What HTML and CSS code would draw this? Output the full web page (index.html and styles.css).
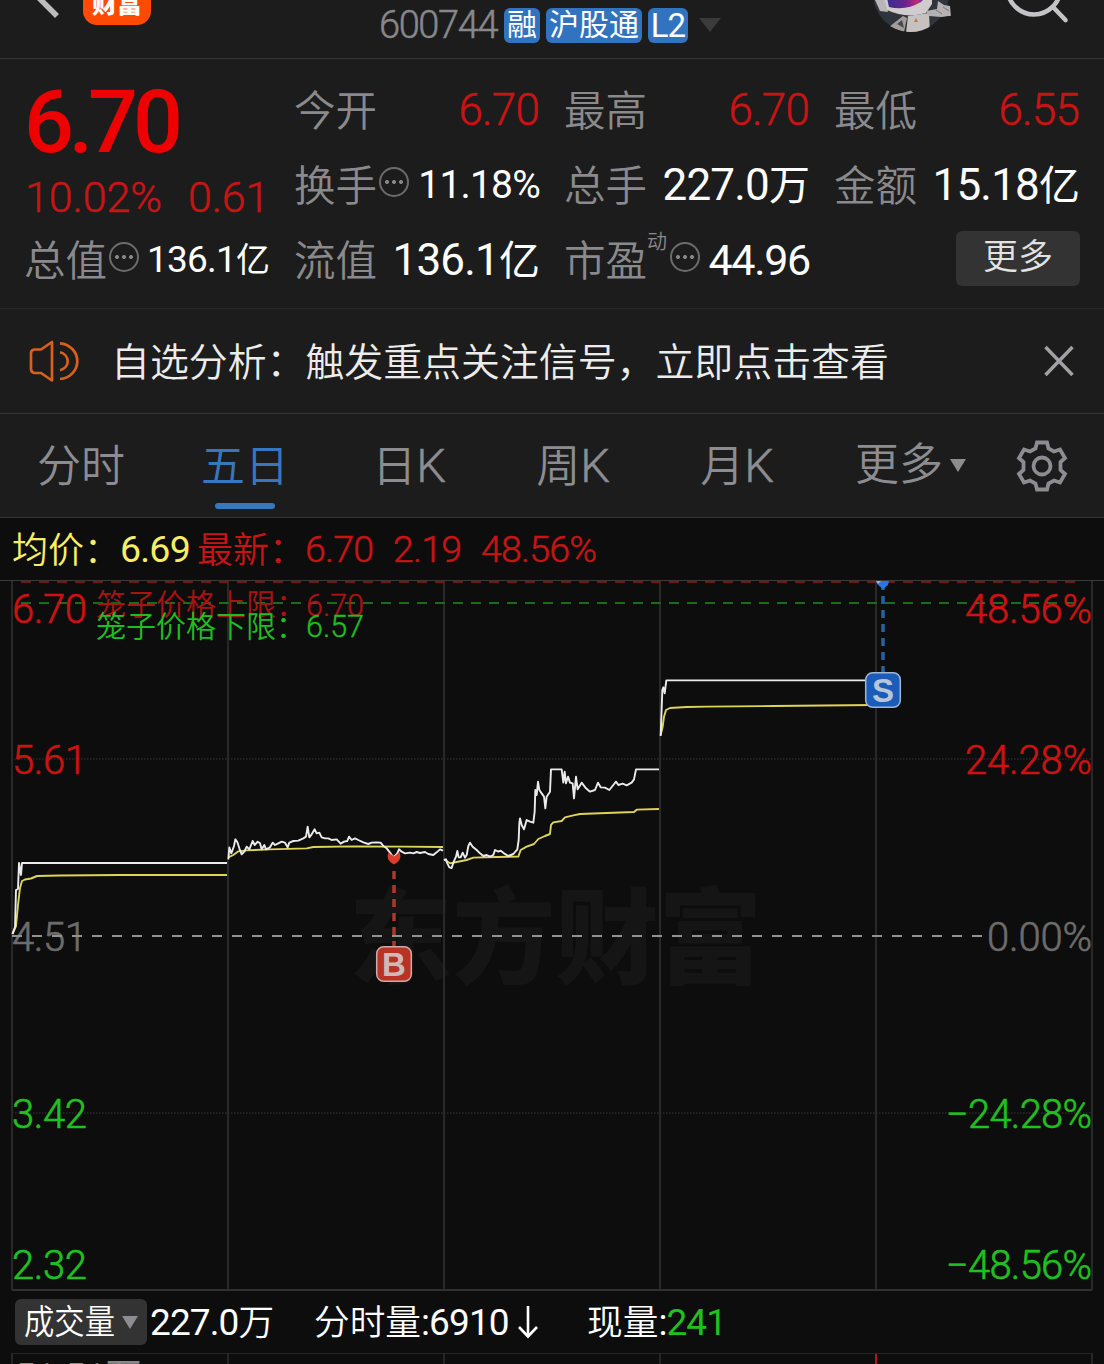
FILE: index.html
```html
<!DOCTYPE html>
<html lang="zh-CN">
<head>
<meta charset="utf-8">
<title>600744</title>
<link rel="stylesheet" href="styles.css">
</head>
<body>
<header class="topbar">
  <div class="side">
    <svg class="back" width="40" height="58" viewBox="25 0 40 58"><path d="M32-9L57 16" stroke="#bdbdbf" stroke-width="5.5"/></svg>
    <span class="logo">财富</span>
  </div>
  <div class="code">
    <span class="num">600744</span><b class="tag">融</b><b class="tag">沪股通</b><b class="tag l2">L2</b><i class="tri"></i>
  </div>
  <div class="side right">
    <svg width="84" height="58" viewBox="870 0 84 58">
      <defs>
        <clipPath id="av"><path d="M870 0H954V15L940 18A38 38 0 0 1 873 0Z"/></clipPath>
        <linearGradient id="visor"><stop offset="0" stop-color="#3a2c93"/><stop offset=".5" stop-color="#6a238f"/><stop offset=".8" stop-color="#c02c72"/><stop offset="1" stop-color="#3346b5"/></linearGradient>
      </defs>
      <g clip-path="url(#av)">
        <circle cx="911" cy="-6" r="38" fill="#30343c"/>
        <path d="M875 0L880 11L888 12L885 0Z" fill="#b9b4b5"/>
        <path d="M884-2L887 10Q906 19 926 13L932 4V-2Z" fill="#d0cbcc"/>
        <path d="M887-2L889 7Q906 11 921 2L925-2Z" fill="url(#visor)"/>
        <path d="M908 16L929 13L930 33H906Z" fill="#c7c1c0"/>
        <path d="M889 27L903 16L907 18L904 32Z" fill="#a39d9e"/>
        <path d="M897 24L902 20L904 28Z" fill="#4a494e"/>
        <path d="M926 11L937 9L938 1L944 5L950 6L951 16L941 17L929 16Z" fill="#b5b0b1"/>
        <path d="M936 10L942 14M943 7L949 11" stroke="#7b777a"/>
        <path d="M914 22L916 18L918 22Z" fill="#b5794c"/>
      </g>
    </svg>
    <svg width="80" height="58" viewBox="1000 0 80 58" fill="none" stroke="#c4c4c6" stroke-width="4.6" stroke-linecap="round"><circle cx="1034" cy="-12" r="26.500"/><path d="M1053 7L1065.500 20"/></svg>
  </div>
</header>

<section class="quote">
  <div class="price">
    <strong>6.70</strong>
    <div class="chg"><span>10.02%</span><span>0.61</span></div>
  </div>
  <div class="cell"><label>今开</label><span class="v up">6.70</span></div>
  <div class="cell"><label>最高</label><span class="v up">6.70</span></div>
  <div class="cell"><label>最低</label><span class="v up">6.55</span></div>
  <div class="cell"><label>换手</label><i class="more-dot"></i><span class="v sm">11.18%</span></div>
  <div class="cell"><label>总手</label><span class="v">227.0<u>万</u></span></div>
  <div class="cell"><label>金额</label><span class="v">15.18<u>亿</u></span></div>
  <div class="cell"><label>总值</label><i class="more-dot"></i><span class="v xs">136.1<u>亿</u></span></div>
  <div class="cell"><label>流值</label><span class="v">136.1<u>亿</u></span></div>
  <div class="cell"><label>市盈</label><sup>动</sup><i class="more-dot"></i><span class="v pe">44.96</span></div>
  <div class="cell"><button class="more">更多</button></div>
</section>

<section class="notice">
  <svg width="54" height="44" viewBox="29 338 54 44" fill="none" stroke="#d8601f" stroke-width="2.7"><path d="M52 341V379.500L41 372H34.500Q31 371.500 31 368V352Q31 349 34.500 348.500H41Z" stroke-linejoin="round"/><path d="M60 342.300A18.700 17.900 0 0 1 60 378M60 351.300A10 9.200 0 0 1 60 369.200"/></svg>
  <p>自选分析：触发重点关注信号，立即点击查看</p>
  <svg width="32" height="32" viewBox="0 0 32 32" stroke="#a2a2a4" stroke-width="3.400"><path d="M2.500 2L29.500 30M29.500 2L2.500 30"/></svg>
</section>

<nav class="tabs">
  <a>分时</a><a class="on">五日</a><a class="k">日<b>K</b></a><a class="k">周<b>K</b></a><a class="k">月<b>K</b></a>
  <a class="drop">更多<i></i></a>
  <svg width="54" height="54" viewBox="-27 -27 54 54" fill="none" stroke="#8c8c91" stroke-width="3.8"><path d="M-5-23.500H5L6.500-17.500L12-14.500L18-16.500L23-8L18.500-4V4L23 8L18 16.500L12 14.500L6.500 17.500L5 23.500H-5L-6.500 17.500L-12 14.500L-18 16.500L-23 8L-18.500 4V-4L-23-8L-18-16.500L-12-14.500L-6.500-17.500Z"/><circle r="8.500"/></svg>
</nav>

<section class="legend">
  <span class="avg"><em>均价：</em>6.69</span>
  <span class="now"><em>最新：</em>6.70</span>
  <span class="now d">2.19</span>
  <span class="now">48.56%</span>
</section>

<svg class="chart" width="1104" height="711" viewBox="0 580 1104 711">
  <text class="mark" x="349" y="976" textLength="413" lengthAdjust="spacingAndGlyphs">东方财富</text>
  <g stroke="#282828" stroke-width="2">
    <path d="M12 580V1290M228 580V1290M444 580V1290M660 580V1290M876 580V1290M1092 580V1290"/>
    <path d="M0 580.500H1104" stroke="#3a3a3a" stroke-width="1"/>
    <path d="M12 1290H1092" stroke="#303030"/>
    <path d="M12 759H1092M12 1113H1092" stroke-width="1.500" stroke-dasharray="1.500 1.500"/>
  </g>
  <path d="M21 582H1076" stroke="#6b1a1a" stroke-width="2" stroke-dasharray="10 8"/>
  <path d="M21 603H1076" stroke="#1c6a1c" stroke-width="2" stroke-dasharray="10 8"/>
  <g class="axis up">
    <text x="12" y="623" textLength="75">6.70</text>
    <text x="12" y="774" textLength="75">5.61</text>
    <text x="965" y="623" textLength="127">48.56%</text>
    <text x="965" y="774" textLength="127">24.28%</text>
  </g>
  <g class="axis flat">
    <text x="12" y="951" textLength="75">4.51</text>
    <text x="987" y="951" textLength="105">0.00%</text>
  </g>
  <g class="axis down">
    <text x="12" y="1128" textLength="75">3.42</text>
    <text x="12" y="1279" textLength="75">2.32</text>
    <text x="946" y="1128" textLength="146">−24.28%</text>
    <text x="946" y="1279" textLength="146">−48.56%</text>
  </g>
  <g class="cage">
    <text class="hi cn" x="96" y="615" textLength="210">笼子价格上限：</text><text class="hi" x="306" y="615.500" textLength="58">6.70</text>
    <text class="lo cn" x="96" y="637" textLength="210">笼子价格下限：</text><text class="lo" x="306" y="637" textLength="58">6.57</text>
  </g>
  <path d="M12 936H986" stroke="#929292" stroke-width="2" stroke-dasharray="10 10"/>
  <g class="avgline">
    <polyline points="12.500,934 16,926 18,905 20,888 22,881 25,879.500 31,878.500 37,876 60,875.500 120,875 227,875"/>
    <polyline transform="translate(220 740) scale(.33333)" points="25,352 40,345 55,334 80,331 150,328 260,325 280,321 400,319 550,320 669,321"/>
    <polyline transform="translate(430 740) scale(.33333)" points="42,358 60,370 80,366 110,360 130,353 200,351 265,350 272,330 290,320 312,312 325,297 345,288 360,282 363,255 370,247 395,243 405,232 430,226 450,222 530,219 612,216 620,209 687,207"/>
    <polyline transform="translate(640 570) scale(.33333)" points="62,495 68,470 72,440 78,420 90,414 140,411 200,410 400,408 700,405"/>
  </g>
  <g class="priceline">
    <polyline points="12.500,934 15,927 16,890 18,889 19,863 21,875 22,863 227,863"/>
    <polyline transform="translate(220 740) scale(.33333)" points="25,358 28,322 34,340 42,318 46,298 52,306 58,325 65,343 73,335 80,320 88,328 98,303 104,315 113,305 120,310 125,328 133,315 138,328 150,322 158,308 165,315 175,310 185,305 195,308 203,322 208,308 220,303 235,302 250,295 258,290 263,260 268,292 275,283 284,268 290,280 298,278 305,292 315,295 325,295 335,300 350,298 362,311 372,305 382,303 387,290 395,300 405,295 415,300 430,307 445,312 455,308 470,307 482,308 490,318 500,325 510,338 520,352 532,340 537,328 545,335 555,340 570,338 580,340 590,336 600,339 615,336 625,342 640,345 650,337 660,328 669,332"/>
    <polyline transform="translate(430 740) scale(.33333)" points="42,360 48,358 52,370 58,382 65,384 70,368 78,350 82,333 86,352 92,352 98,338 105,353 110,345 115,318 120,308 128,320 140,330 150,340 160,348 170,345 180,350 190,345 195,330 205,335 212,332 222,340 235,348 250,342 262,328 266,300 268,250 270,235 275,255 282,268 290,240 300,245 310,248 314,215 316,150 320,165 324,125 328,150 335,160 342,170 346,205 350,170 360,155 363,88 395,88 400,128 404,95 408,130 414,110 420,128 428,130 432,175 438,110 443,148 455,128 468,145 480,155 495,150 504,128 512,142 525,143 538,150 550,135 558,125 565,135 578,131 590,136 605,128 612,118 618,88 687,88"/>
    <polyline transform="translate(640 570) scale(.33333)" points="62,498 64,440 67,360 70,352 74,370 79,331 700,331"/>
  </g>
  <path d="M394 871V946" stroke="#a83a30" stroke-width="3.500" stroke-dasharray="8 6"/>
  <path d="M388.500 852.500L394 856.500L399.500 852Q403 860 394 864.500Q385 860 388.500 852.500Z" fill="#dc3c2a"/>
  <rect x="376.700" y="946.700" width="34.600" height="34.600" rx="7" fill="#b83226" stroke="#cfaaa6" stroke-width="1.500"/>
  <text class="pin" x="394" y="976" fill="#d0bab8">B</text>
  <path d="M883 582V672" stroke="#2560a8" stroke-width="3.500" stroke-dasharray="8 6"/>
  <path d="M876 581H889L888 585L883 589L878 585Z" fill="#2a76da"/><path d="M876 581H881L878 584Z" fill="#9cb6d8"/>
  <rect x="865.700" y="672.700" width="34.600" height="34.600" rx="7" fill="#1a5cb8" stroke="#a0b6d8" stroke-width="1.500"/>
  <text class="pin" x="883" y="702" fill="#b9c6da">S</text>
</svg>

<section class="volume">
  <button><span>成交量</span><i></i></button>
  <span class="a">227.0<u>万</u></span>
  <span class="b"><span><u>分时量</u>:6910</span><svg width="22" height="34" viewBox="0 0 22 34" fill="none" stroke="#fff" stroke-width="2.600"><path d="M11 1V31M2 22L11 31.500L20 22"/></svg></span>
  <span class="c"><u>现量</u>:<em>241</em></span>
</section>
<section class="volchart">
  <div></div><div></div><div></div><div></div><div class="last"></div>
  <span>51.51万</span>
</section>
</body>
</html>
```
FILE: styles.css
```css
* { box-sizing: border-box; }
body {
  margin: 0;
  width: 1104px;
  height: 1364px;
  overflow: hidden;
  background: #0d0d0d;
  color: #fff;
  font-family: Roboto, "Noto Sans CJK SC", sans-serif;
}
i, em { font-style: normal; }
u { text-decoration: none; line-height: 0; }
button { border: 0; color: inherit; font-family: inherit; padding: 0; }

.topbar {
  height: 59px;
  display: grid;
  grid-template-columns: 379px 1fr 234px;
  background: #1c1c1c;
  border-bottom: 1px solid #363636;
  overflow: hidden;
}
.side { display: flex; }
.back { margin-left: 25px; }
.logo {
  margin: -43px 0 0 18px;
  width: 68px;
  height: 68px;
  border-radius: 14px;
  background: #ff4a05;
  font-weight: 900;
  font-size: 25px;
  line-height: 36px;
  padding-top: 30px;
  text-align: center;
}
.code { display: flex; align-items: center; height: 50px; }
.code .num { font-size: 38px; color: #88888b; font-weight: 350; width: 125px; letter-spacing: -1.400px; -webkit-text-stroke: .5px; }
.tag {
  height: 35px;
  border-radius: 6px;
  background: #3273bf;
  font-size: 30px;
  font-weight: 400;
  line-height: 33px;
  width: 36px;
  text-align: center;
  margin-right: 6px;
}
.tag:nth-of-type(2) { width: 96px; }
.tag.l2 { width: 40px; font-size: 33px; line-height: 36px; letter-spacing: -1px; }
.tri { border: 11px solid transparent; border-top: 14px solid #3b3b3b; border-bottom: 0; margin-left: 5px; }
.right svg:last-child { margin-left: 46px; }

.quote {
  height: 250px;
  padding: 13px 24px 0 25px;
  display: grid;
  grid-template-columns: repeat(4, 245px);
  grid-template-rows: repeat(3, 75px);
  column-gap: 25px;
  background: #1c1c1c;
  border-bottom: 1px solid #292929;
}
.price { grid-row: span 2; color: #ee0000; }
.price strong { display: block; font-size: 88px; font-weight: 500; line-height: 88px; height: 90px; padding-top: 6px; letter-spacing: -5.200px; margin-left: -1px; }
.chg { display: flex; gap: 26px; font-size: 43px; line-height: 50px; padding-top: 10px; color: #c81414; letter-spacing: -.1px; font-weight: 350; -webkit-text-stroke: .5px; }
.cell { display: flex; align-items: center; }
.cell label { font: 350 41.500px/60px "Noto Sans CJK SC", sans-serif; color: #8a8a8d; margin: -4px -1px 0 -1px; }
.v { margin-left: auto; font-size: 44px; letter-spacing: -.8px; white-space: nowrap; line-height: 52px; }
.v u { font-size: 41px; letter-spacing: 0; }
.v.up { color: #c81414; font-weight: 350; margin-right: 1px; -webkit-text-stroke: .5px; }
.v.sm { font-size: 39px; letter-spacing: -.8px; }
.v.xs { font-size: 37px; letter-spacing: -.8px; }
.v.xs u { font-size: 34px; }
.v.pe { font-size: 43px; letter-spacing: -1.300px; }
.more-dot {
  width: 30px;
  height: 30px;
  flex: none;
  margin: -6px 0 0 3px;
  border: 2px solid #6c6c6c;
  border-radius: 50%;
  background:
    radial-gradient(circle at 6px 13px, #858585 1.600px, transparent 2.300px),
    radial-gradient(circle at 13px 13px, #858585 1.600px, transparent 2.300px),
    radial-gradient(circle at 20px 13px, #858585 1.600px, transparent 2.300px);
}
.cell sup { font-size: 20px; line-height: 20px; color: #8a8a8d; margin: -36px 0 0 1px; font-weight: 350; }
.more { margin: -3px 0 0 auto; width: 124px; height: 55px; border-radius: 6px; background: #333; color: #e2e2e2; font-size: 35px; font-weight: 350; line-height: 52px; }

.notice { height: 105px; display: flex; align-items: center; padding: 0 29px; background: #1c1c1c; border-bottom: 1px solid #363636; }
.notice p { margin: -5px auto 0 28px; font: 350 38.900px/60px "Noto Sans CJK SC", sans-serif; color: #ececec; }

.tabs { height: 104px; display: flex; background: #1c1c1c; border-bottom: 1px solid #363636; color: #8c8c91; font-size: 44px; font-weight: 350; line-height: 107px; }
.tabs a { width: 164px; text-align: center; position: relative; text-indent: -2px; }
.tabs b { font-weight: inherit; font-size: 47px; line-height: 0; -webkit-text-stroke: .5px; }
.tabs .on { color: #3876bd; }
.tabs .on::after { content: ""; position: absolute; left: 51px; bottom: 8px; width: 60px; height: 6px; border-radius: 3px; background: #3876bd; }
.tabs .drop { margin-left: 35px; width: 160px; display: flex; align-items: center; text-indent: 0; height: 103px; }
.drop i { border: 8px solid transparent; border-top: 13px solid #8c8c91; border-bottom: 0; margin-left: 7px; }
.tabs svg { margin-top: 25px; }

.legend { height: 62px; display: flex; padding-left: 12px; font-size: 37.500px; line-height: 62px; letter-spacing: -.8px; white-space: nowrap; }
.legend em { width: 108px; font: 350 36px/58px "Noto Sans CJK SC", sans-serif; letter-spacing: 0; -webkit-text-stroke: 0; }
.legend span { display: flex; }
.avg { width: 185px; color: #f8ee66; }
.now { width: 196px; color: #c81414; font-weight: 350; -webkit-text-stroke: .5px; }
.now.d { width: 88px; }

.chart { display: block; }
.chart polyline { fill: none; stroke-linejoin: round; vector-effect: non-scaling-stroke; stroke-width: 1.900px; }
.avgline { stroke: #dfd45a; }
.priceline { stroke: #ebebeb; }
.mark { font: 900 104px "Noto Sans CJK SC", sans-serif; fill: #151515; }
.axis { font-size: 40px; font-weight: 350; stroke-width: .6px; }
.axis.up { fill: #cc1212; stroke: #cc1212; }
.axis.flat { fill: #6c6c6c; stroke: #6c6c6c; }
.axis.down { fill: #20c020; stroke: #20c020; }
.cage { font-size: 30.500px; font-weight: 350; stroke-width: .4px; }
.cage .cn { font: 350 30px "Noto Sans CJK SC", sans-serif; stroke: none; }
.hi { fill: #a81414; stroke: #a81414; }
.lo { fill: #20bd20; stroke: #20bd20; }
.pin { font: 700 33px "Liberation Sans", sans-serif; text-anchor: middle; }

.volume { height: 62px; display: flex; align-items: center; padding-left: 15px; font-size: 37px; letter-spacing: -.9px; white-space: nowrap; }
.volume u { font-size: 35.700px; letter-spacing: 0; font-weight: 350; }
.volume button { width: 132px; height: 46px; border-radius: 6px; background: #333; display: flex; align-items: center; padding-left: 9px; }
.volume button span { font-size: 34px; font-weight: 350; line-height: 40px; width: 91px; transform: scaleX(.892); transform-origin: left; white-space: nowrap; }
.volume button i { border: 8px solid transparent; border-top: 13px solid #8c8c91; border-bottom: 0; margin-left: 7px; }
.volume .a { width: 167px; padding-left: 3px; }
.volume .b { width: 273px; display: flex; align-items: center; }
.volume .b svg { margin-left: 8px; }
.volume em { color: #20c020; }

.volchart { height: 11px; margin: 0 11px; width: 1082px; display: flex; border: 2px solid #262626; border-top-width: 1px; border-bottom: 0; overflow: hidden; position: relative; }
.volchart div { flex: none; width: 216px; border-right: 2px solid #262626; }
.volchart div:nth-child(4) { border-right-color: #b01818; }
.volchart .last { border: 0; }
.volchart span { position: absolute; left: 2px; top: 5px; font-size: 36px; line-height: 36px; color: #888; }
```
